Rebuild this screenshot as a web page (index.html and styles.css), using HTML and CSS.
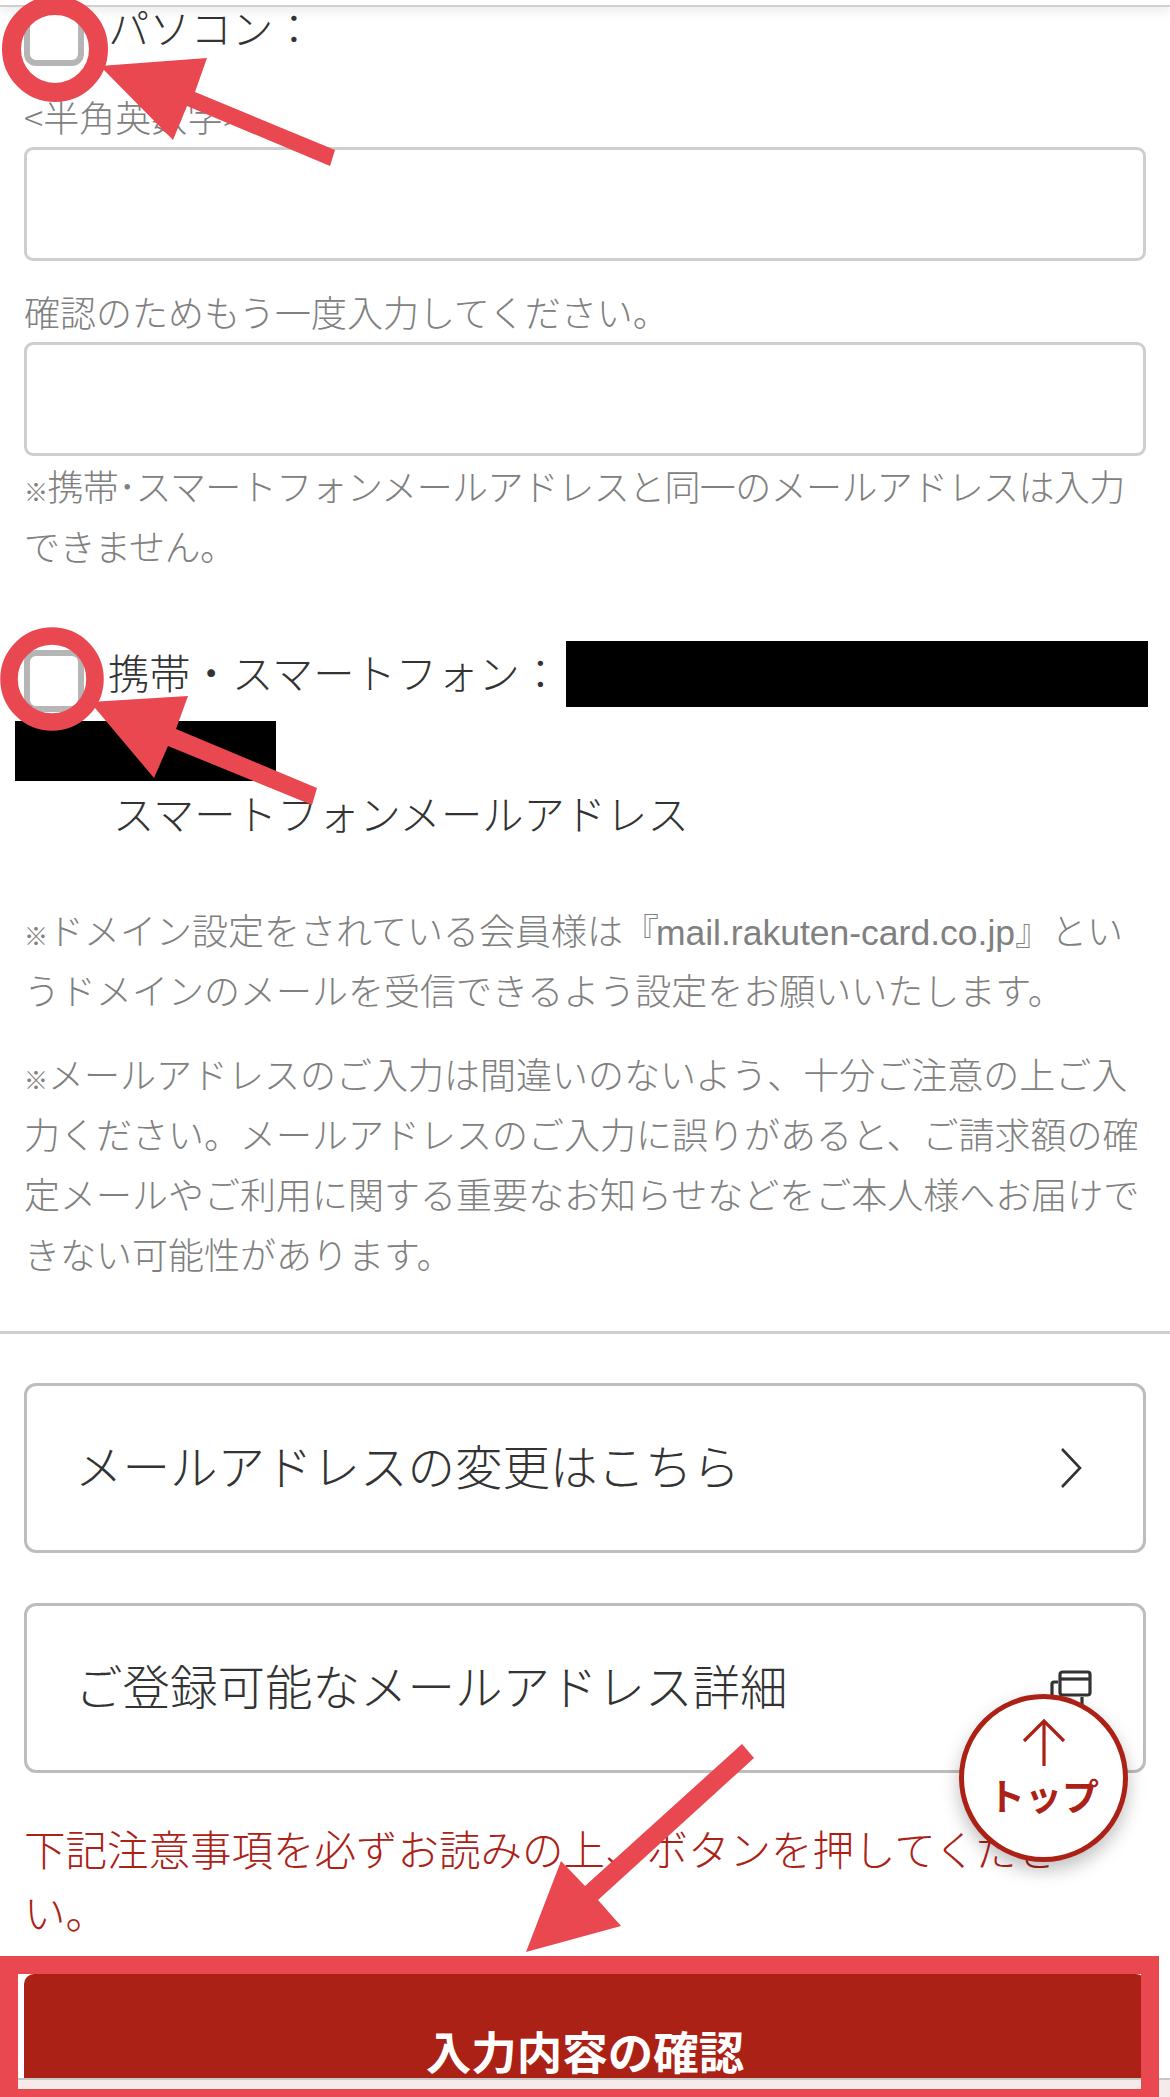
FILE: index.html
```html
<!DOCTYPE html>
<html lang="ja">
<head>
<meta charset="utf-8">
<title>メールアドレス</title>
<link rel="stylesheet" href="styles.css">
</head>
<body>
<div class="page">
  <div class="topline"></div>
  <main class="main">
    <div class="opt">
      <span class="check check-first"></span>
      <span class="label label-first">パソコン：</span>
    </div>
    <p class="hint hint-first">&lt;半角英数字&gt;</p>
    <div class="field"></div>
    <p class="hint hint-second">確認のためもう一度入力してください。</p>
    <div class="field"></div>
    <p class="note note-a"><span class="mark">※</span>携帯･スマートフォンメールアドレスと同一のメールアドレスは入力<br>できません。</p>

    <div class="opt opt-mobile">
      <span class="check"></span>
      <span class="label">携帯・スマートフォン：</span>
      <span class="redact redact-a"></span>
    </div>
    <div class="redact redact-b"></div>
    <p class="label label-sub">スマートフォンメールアドレス</p>

    <p class="note note-b"><span class="mark">※</span>ドメイン設定をされている会員様は『<span class="lat">mail.rakuten-card.co.jp</span>』とい<br>うドメインのメールを受信できるよう設定をお願いいたします。</p>
    <p class="note note-c"><span class="mark">※</span>メールアドレスのご入力は間違いのないよう、十分ご注意の上ご入<br>力ください。メールアドレスのご入力に誤りがあると、ご請求額の確<br>定メールやご利用に関する重要なお知らせなどをご本人様へお届けで<br>きない可能性があります。</p>

    <hr class="rule">

    <a class="linkbox linkbox-next">
      <span class="linktext">メールアドレスの変更はこちら</span>
      <svg class="chev" width="22" height="40" viewBox="0 0 22 40"><path d="M2 1 L20 20 L2 39" fill="none" stroke="#333" stroke-width="2.6"/></svg>
    </a>
    <a class="linkbox linkbox-win">
      <span class="linktext">ご登録可能なメールアドレス詳細</span>
      <svg class="win" width="42" height="44" viewBox="0 0 42 44" fill="none" stroke="#333" stroke-width="3.2"><rect x="10" y="2" width="30" height="23" rx="2.5"/><path d="M10 9 H40"/><path d="M8 12 H4 Q2 12 2 14 V36"/><path d="M32 27 V36"/></svg>
    </a>

    <p class="warn">下記注意事項を必ずお読みの上、ボタンを押してくださ<br>い。</p>

    <button class="submit" type="button">入力内容の確認</button>
  </main>
  <div class="footbar"></div>

  <a class="totop">
    <svg width="44" height="50" viewBox="0 0 44 50" fill="none" stroke="#ac2116" stroke-width="3.2"><path d="M22 3 V48"/><path d="M2 23 L22 3 L42 23"/></svg>
    <span class="totop-text">トップ</span>
  </a>

  <svg class="marks" width="1170" height="2097" viewBox="0 0 1170 2097">
    <circle cx="55" cy="49" r="43.5" fill="none" stroke="#e94850" stroke-width="19"/>
    <polygon fill="#e94850" points="100,66 207,58 195,92 335,150 330,166 187,106 173,140"/>
    <circle cx="52" cy="679" r="43" fill="none" stroke="#e94850" stroke-width="17.5"/>
    <polygon fill="#e94850" points="90,702 188,696 176,729 317,788 312,805 168,746 154,778"/>
    <polygon fill="#e94850" points="742,1744 754,1758 598,1900 621,1926 526,1952 561,1861 585,1886"/>
    <path fill="#e94850" fill-rule="evenodd" d="M0 1956 H1159 V2097 H0 Z M18 1974 V2089 H1141 V1974 Z"/>
  </svg>
</div>
</body>
</html>
```

FILE: styles.css
```css
html, body {
  margin: 0;
  padding: 0;
  background: #fff;
}
.page {
  position: relative;
  width: 1170px;
  height: 2097px;
  overflow: hidden;
  font-family: "Noto Sans CJK JP", "Liberation Sans", sans-serif;
  font-weight: 300;
  color: #333;
}
.topline {
  position: absolute;
  top: 0;
  left: 0;
  right: 0;
  height: 5px;
  background: #fff;
  border-bottom: 2px solid #cfcfcf;
  box-shadow: 0 3px 12px rgba(0, 0, 0, 0.12);
  z-index: 2;
}
.main {
  padding: 0 24px;
}
p {
  margin: 0;
}
.opt {
  display: flex;
  align-items: flex-start;
  gap: 24px;
  height: 56px;
}
.check {
  flex: none;
  box-sizing: border-box;
  width: 60px;
  height: 62px;
  margin-top: 6px;
  border: 6px solid #b5b5b5;
  border-radius: 12px;
  background: #fff;
}
.check-first {
  margin-top: 4px;
}
.label {
  font-size: 41.3px;
  line-height: 56px;
  color: #333;
  white-space: nowrap;
}
.label-first {
  line-height: 52px;
}
.hint {
  font-size: 36px;
  line-height: 50px;
  color: #808080;
  white-space: nowrap;
}
.hint-first {
  margin-top: 35px;
}
.hint-second {
  margin-top: 25px;
}
.field {
  box-sizing: border-box;
  height: 114px;
  margin-top: 6px;
  border: 3px solid #cecece;
  border-radius: 9px;
  background: #fff;
}
.note {
  font-size: 36px;
  line-height: 60px;
  color: #808080;
  white-space: nowrap;
}
.mark {
  font-size: 24px;
  line-height: 1;
}
.lat {
  margin-left: -3px;
  font-family: "Liberation Sans", sans-serif;
  font-weight: 400;
  font-size: 35.5px;
  line-height: 1;
}
.note-a {
  margin-top: -1px;
  letter-spacing: -0.6px;
}
.opt-mobile {
  height: 60px;
  margin-top: 69px;
}
.opt-mobile .label {
  line-height: 54px;
}
.redact {
  background: #000;
}
.redact-a {
  flex: none;
  width: 582px;
  height: 66px;
  margin: -3px 0 0 -19px;
}
.redact-b {
  width: 261px;
  height: 60px;
  margin: 17px 0 0 -9px;
}
.label-sub {
  line-height: 60px;
  margin-top: 1px;
  padding-left: 89px;
}
.note-b {
  margin-top: 57px;
}
.note-c {
  margin-top: 24px;
}
.rule {
  height: 3px;
  margin: 48px -24px 0;
  border: 0;
  background: #cecece;
}
.linkbox {
  box-sizing: border-box;
  display: flex;
  align-items: center;
  justify-content: space-between;
  height: 170px;
  padding: 0 61px 0 48px;
  border: 3px solid #bdbdbd;
  border-radius: 12px;
  font-size: 47.5px;
  color: #333;
}
.linktext {
  padding-bottom: 8px;
}
.linkbox-next {
  margin-top: 49px;
}
.linkbox-win {
  margin-top: 50px;
  padding-right: 51px;
}
.win {
  margin-top: 8px;
}
.warn {
  margin-top: 44px;
  font-size: 41.5px;
  line-height: 63px;
  color: #ac2116;
  white-space: nowrap;
}
.submit {
  display: block;
  box-sizing: border-box;
  width: 100%;
  height: 104px;
  margin-top: 31px;
  padding: 48px 0 0;
  border: 0;
  border-radius: 10px 10px 0 0;
  background: #ac2116;
  color: #fff;
  font-family: inherit;
  font-size: 45.5px;
  font-weight: 700;
  line-height: 48px;
  text-align: center;
}
.footbar {
  box-sizing: border-box;
  height: 19px;
  border-top: 2px solid #c8c8c8;
  background: #f6eaea;
}
.totop {
  position: absolute;
  left: 959px;
  top: 1694px;
  box-sizing: border-box;
  width: 169px;
  height: 168px;
  padding-top: 19px;
  display: flex;
  flex-direction: column;
  align-items: center;
  border: 5px solid #ac2116;
  border-radius: 50%;
  background: #fff;
  box-shadow: 0 8px 18px rgba(0, 0, 0, 0.25);
}
.totop-text {
  margin-top: 7px;
  font-size: 37px;
  font-weight: 700;
  line-height: 40px;
  color: #ac2116;
  white-space: nowrap;
}
.marks {
  position: absolute;
  top: 0;
  left: 0;
  z-index: 3;
  pointer-events: none;
}
```
